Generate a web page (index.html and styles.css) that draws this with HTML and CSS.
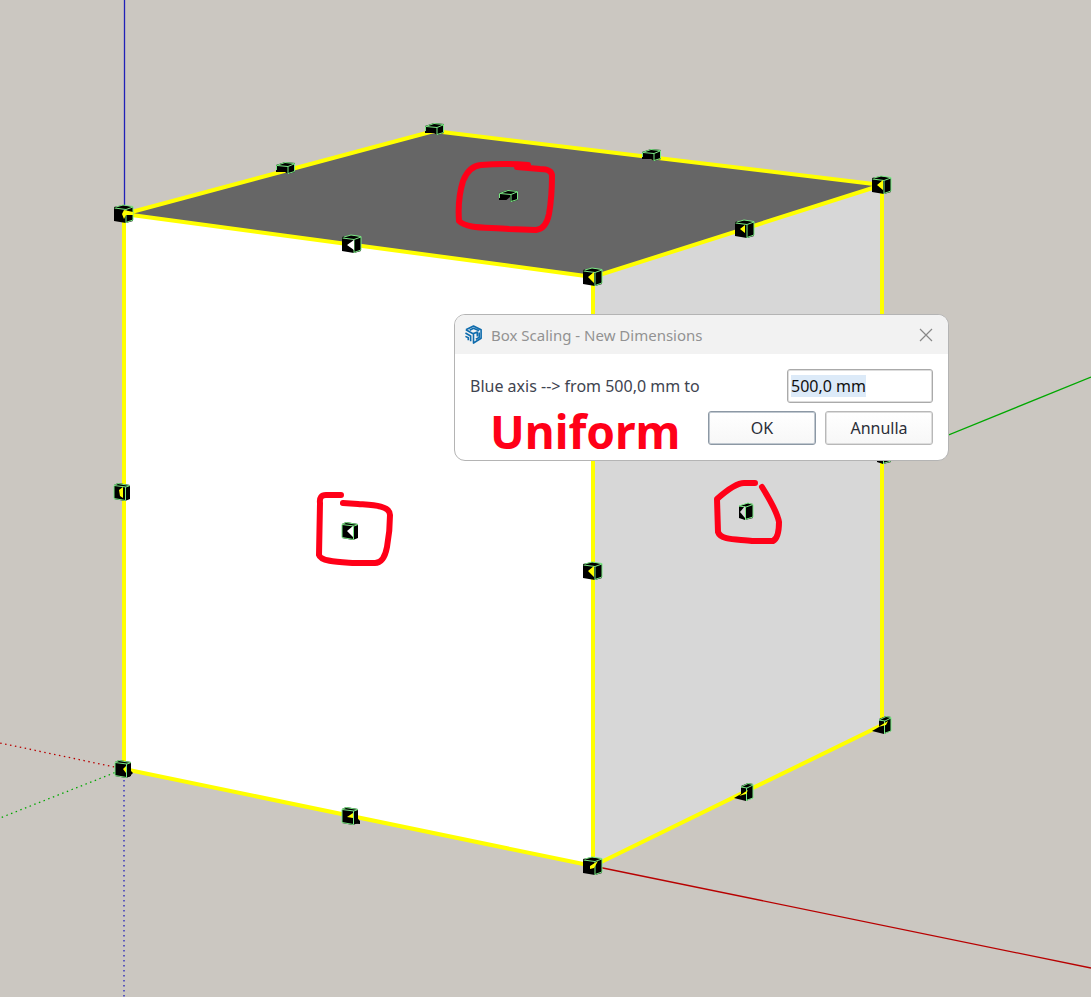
FILE: index.html
```html
<!DOCTYPE html>
<html lang="it">
<head>
    <meta charset="UTF-8">
    <meta name="viewport" content="width=device-width, initial-scale=1.0">
    <title>Box Scaling</title>
    <link rel="stylesheet" href="styles.css">
</head>
<body>
    <main class="workspace">
        <svg class="scene" viewBox="0 0 1091 997" preserveAspectRatio="xMidYMid slice" aria-hidden="true">
            <defs>
                <!-- scale grips, centred on 0,0 -->
                <g id="grip">
                    <path class="grip-body" d="M-10-7L-1-9L9-7V7L2 9L-10 7Z"/>
                    <path class="grip-edge" d="M-8-7L-1-9L9-7.500V6L2 8.500M-9.500-6L2-4.500L9-7M2-4V9"/>
                </g>
                <g id="grip-flat">
                    <path class="grip-body" d="M-10-3L-1-6L9-5V4L2 6L-1 4H-10Z"/>
                    <path class="grip-edge" d="M-9.500 2V-2.500L-1-5.500L8.500-4.500V3.500L2 5.500M-9-2.500L2-1.500L8-4M2-1V6"/>
                </g>
                <g id="grip-front">
                    <path class="grip-body" d="M-8-7L-4-9L8-7V7L3 9L-8 7Z"/>
                    <path class="grip-edge" d="M-8 6.500V-6.500L-4-8.500L7.500-6.500M-8-6.500L4-5L8-6.500M3.500-5V8.500L-8 6.500"/>
                </g>
                <g id="grip-side">
                    <path class="grip-body" d="M-7-5L2-8L7-7V7L-1 9L-7 7Z"/>
                    <path class="grip-edge" d="M-7-5L2-8L7-6.500V6L-1 8.500M-7-5L0-4L7-6.500M-.500-4V9"/>
                </g>
                <g id="grip-low">
                    <path class="grip-body" d="M-5-6L2-9L7-8V6L0 9L-12 6L-5 2Z"/>
                    <path class="grip-edge" d="M-5-5L2-8.500L7-7.500V6L0 8.500M-5-5L1-4L7-7M.500-4V9"/>
                </g>
            </defs>

            <!-- axes -->
            <path class="axis axis-blue" d="M124.500 0V214"/>
            <path class="axis axis-blue dotted" d="M124 770V997"/>
            <path class="axis axis-red" d="M593 866L1091 968"/>
            <path class="axis axis-red dotted" d="M124 769L0 743"/>
            <path class="axis axis-green" d="M882 462L1091 377"/>
            <path class="axis axis-green dotted" d="M124 769L0 818"/>

            <!-- box -->
            <path class="face-front" d="M124 214L593 277V866L124 769Z"/>
            <path class="face-side" d="M593 277L882 185V725L593 866Z"/>
            <path class="face-top" d="M124 214L434 131L882 185L593 277Z"/>
            <path class="edge" d="M124 214L434 131L882 185L593 277ZV769L593 866L882 725V185M593 277V866"/>

            <use href="#grip" x="124" y="214"/>
            <use href="#grip-flat" x="286" y="168"/>
            <use href="#grip-flat" x="435" y="129"/>
            <use href="#grip-flat" x="652" y="155"/>
            <use href="#grip" x="882" y="185"/>
            <use href="#grip" x="745" y="229"/>
            <use href="#grip" x="352" y="244"/>
            <use href="#grip" x="593" y="277"/>
            <use href="#grip-flat" x="509" y="196"/>
            <use href="#grip-front" x="122" y="492"/>
            <use href="#grip-front" x="350" y="531"/>
            <use href="#grip" x="593" y="571"/>
            <use href="#grip-side" x="746" y="511"/>
            <use href="#grip-side" x="884" y="455"/>
            <path class="grip-body" d="M122 762L133 773L129 777L115 775Z"/>
            <use href="#grip-front" x="123" y="769"/>
            <path class="grip-body" d="M350 810L360 821V824L344 823Z"/>
            <use href="#grip-front" x="350" y="816"/>
            <use href="#grip" x="593" y="866"/>
            <use href="#grip-low" x="746" y="792"/>
            <use href="#grip-low" x="884" y="725"/>

            <!-- face colour seen through the grips -->
            <path class="notch-edge" d="M588 277L594 272V283ZM588 571L594 566V577ZM124 210L122 214L124 219L126 215L133 215V212ZM877 185L883 180V190ZM740 229L745 225V233ZM119 490L123 487V498L120 496ZM590 869V866L598 861L594 868ZM123 769L126 766V773ZM347 817L353 813V818ZM878 727L888 721L886 725ZM739 796L748 790L746 794Z"/>
            <path class="notch-white" d="M347 531L353 526V537ZM347 245L354 240V250Z"/>
            <path class="notch-side" d="M740 512L745 506V518Z"/>
            <path class="notch-top" d="M504 202L510 197V202Z"/>

            <!-- hand-drawn marks -->
            <path class="mark" d="M528 165Q504 163 481 165Q469 166 463 181C459 194 458 207 459 221C467 229 487 227 509 229L536 230Q546 229 549 214Q552 197 552 175Q551 169 540 169L517 167"/>
            <path class="mark" d="M341 495H326Q319 495 320 503L319 555C321 562 340 562 355 563L375 563Q384 563 387 547Q390 531 390 515C390 505 370 505 358 504L343 503"/>
            <path class="mark" d="M755 483H744Q735 483 717 499L718 532C721 541 739 539 752 541L773 541Q779 538 779 522Q777 511 762 487"/>
        </svg>

        <form class="dialog" role="dialog" aria-labelledby="dialogTitle">
            <header class="dialog-bar">
                <svg class="logo" viewBox="0 0 20 20" aria-hidden="true">
                    <path d="M2 5L10 1L18 5V14L10 19V9L14 7.500V12M6 5.500L10 3.500L16 6M2 5L10 9.500M1.500 8.500L7 11.500V17M1.500 12L4.500 13.500V16M12.500 15L16 13V8"/>
                </svg>
                <h1 class="dialog-title" id="dialogTitle">Box Scaling - New Dimensions</h1>
                <button class="close" type="button" aria-label="Close">
                    <svg viewBox="0 0 14 14" aria-hidden="true"><path d="M1 1L13 13M13 1L1 13"/></svg>
                </button>
            </header>
            <div class="dialog-body">
                <div class="field">
                    <label for="blueAxis">Blue axis --&gt; from 500,0 mm to</label>
                    <input type="text" id="blueAxis" value="500,0 mm">
                </div>
                <div class="actions">
                    <strong class="note">Uniform</strong>
                    <button class="btn btn-default" type="submit">OK</button>
                    <button class="btn" type="button">Annulla</button>
                </div>
            </div>
        </form>
    </main>

    <script>
        const field = document.getElementById('blueAxis');
        field.focus();
        field.select();
    </script>
</body>
</html>
```

FILE: styles.css
```css
* {
    box-sizing: border-box;
}
body {
    margin: 0;
    font-family: "Noto Sans", "Open Sans", sans-serif;
    font-size: 16px;
    background-color: #cbc7c1;
}
.workspace {
    position: relative;
    min-height: 100vh;
    overflow: hidden;
}
.scene {
    display: block;
    width: 100%;
    height: 100vh;
}

/* model */
.axis {
    fill: none;
    stroke-width: 1.3;
}
.axis-blue {
    stroke: #2020b8;
}
.axis-red {
    stroke: #b80000;
}
.axis-green {
    stroke: #00a800;
}
.dotted {
    stroke-dasharray: 1.5 3.5;
}
.face-front {
    fill: #fff;
}
.face-side {
    fill: #d7d7d7;
}
.face-top {
    fill: #666;
}
.edge {
    fill: none;
    stroke: #ff0;
    stroke-width: 4;
    stroke-linejoin: round;
}
.grip-body {
    fill: #000;
}
.grip-edge {
    fill: none;
    stroke: #7be884;
    stroke-width: 1;
}
.notch-edge {
    fill: #ff0;
}
.notch-white {
    fill: #fff;
}
.notch-side {
    fill: #d7d7d7;
}
.notch-top {
    fill: #666;
}
.mark {
    fill: none;
    stroke: #ff0018;
    stroke-width: 6;
    stroke-linecap: round;
    stroke-linejoin: round;
}

/* dialog */
.dialog {
    position: absolute;
    top: 314px;
    left: 454px;
    width: 495px;
    background: #fff;
    border: 1px solid #b4b4b4;
    border-radius: 11px;
}
.dialog-bar {
    display: flex;
    align-items: center;
    gap: 8px;
    height: 39px;
    padding: 0 13px 0 9px;
    background: #f2f2f2;
    border-radius: 10px 10px 0 0;
}
.logo {
    width: 19px;
    height: 19px;
    fill: none;
    stroke: #0f6cad;
    stroke-width: 1.7;
    stroke-linejoin: round;
}
.dialog-title {
    flex: 1;
    margin: 0;
    font-size: 15px;
    line-height: 20px;
    font-weight: normal;
    color: #929292;
}
.close {
    display: flex;
    padding: 2px;
    border: 0;
    background: none;
}
.close svg {
    width: 14px;
    height: 14px;
    fill: none;
    stroke: #888;
    stroke-width: 1.2;
}
.dialog-body {
    display: grid;
    gap: 8px;
    padding: 15px;
}
.field,
.actions {
    display: flex;
    align-items: center;
    height: 34px;
}
.field {
    justify-content: space-between;
    color: #404450;
}
.field input {
    width: 146px;
    height: 34px;
    padding: 0 3px;
    border: 1px solid #aaa;
    border-radius: 3px;
    outline: none;
    box-shadow: inset 0 0 0 1px #ddd;
    font: inherit;
    color: #111;
}
.field input::selection {
    color: #111;
    background: #dceaf8;
}
.actions {
    gap: 9px;
}
.note {
    margin: 0 auto 0 20px;
    padding-top: 6px;
    font-size: 46px;
    line-height: 64px;
    color: #ff0018;
}
.btn {
    width: 108px;
    height: 34px;
    padding: 0;
    border: 1px solid #b8b8b8;
    border-radius: 3px;
    box-shadow: inset 0 0 0 1px #ddd;
    background: linear-gradient(#fff, #f7f7f7);
    font: inherit;
    color: #2a2e38;
}
.btn-default {
    border-color: #8c98a4;
    box-shadow: inset 0 0 0 1px #c0c8d0;
}
```
